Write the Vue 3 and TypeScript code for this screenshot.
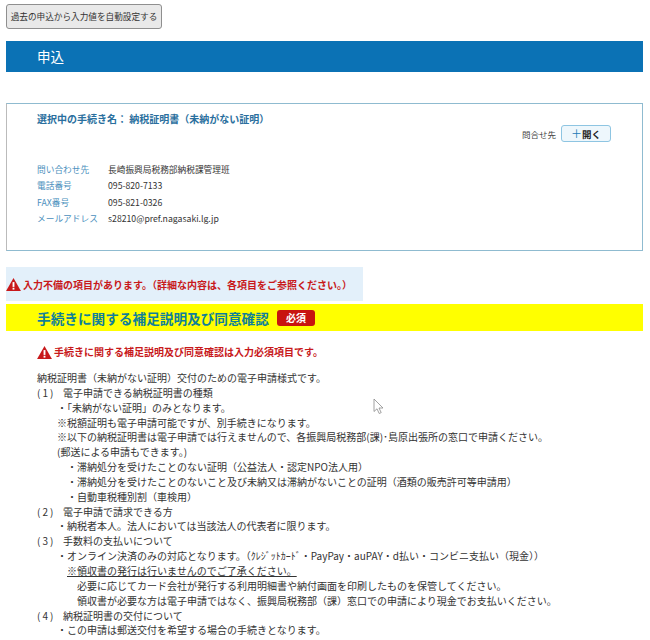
<script setup lang="ts">
interface Line { text: string; indent: string; num?: string; underline?: boolean }
const lines: Line[] = [
  { text: '納税証明書（未納がない証明）交付のための電子申請様式です。', indent: 'i0' },
  { num: '(1)', text: '電子申請できる納税証明書の種類', indent: 'i0' },
  { text: '・「未納がない証明」のみとなります。', indent: 'i1' },
  { text: '※税額証明も電子申請可能ですが、別手続きになります。', indent: 'i1' },
  { text: '※以下の納税証明書は電子申請では行えませんので、各振興局税務部(課)･島原出張所の窓口で申請ください。', indent: 'i1' },
  { text: '(郵送による申請もできます。)', indent: 'i1' },
  { text: '・滞納処分を受けたことのない証明（公益法人・認定NPO法人用）', indent: 'i2' },
  { text: '・滞納処分を受けたことのないこと及び未納又は滞納がないことの証明（酒類の販売許可等申請用）', indent: 'i2' },
  { text: '・自動車税種別割（車検用）', indent: 'i2' },
  { num: '(2)', text: '電子申請で請求できる方', indent: 'i0' },
  { text: '・納税者本人。法人においては当該法人の代表者に限ります。', indent: 'i1' },
  { num: '(3)', text: '手数料の支払いについて', indent: 'i0' },
  { text: '・オンライン決済のみの対応となります。（ｸﾚｼﾞｯﾄｶｰﾄﾞ・PayPay・auPAY・d払い・コンビニ支払い（現金））', indent: 'i1' },
  { text: '※領収書の発行は行いませんのでご了承ください。', indent: 'i2', underline: true },
  { text: '必要に応じてカード会社が発行する利用明細書や納付画面を印刷したものを保管してください。', indent: 'i3' },
  { text: '領収書が必要な方は電子申請ではなく、振興局税務部（課）窓口での申請により現金でお支払いください。', indent: 'i3' },
  { num: '(4)', text: '納税証明書の交付について', indent: 'i0' },
  { text: '・この申請は郵送交付を希望する場合の手続きとなります。', indent: 'i1' }
]
const contacts = [
  { label: '問い合わせ先', value: '長崎振興局税務部納税課管理班' },
  { label: '電話番号', value: '095-820-7133' },
  { label: 'FAX番号', value: '095-821-0326' },
  { label: 'メールアドレス', value: 's28210@pref.nagasaki.lg.jp' }
]
</script>

<template>
  <div class="page">
    <button class="history">過去の申込から入力値を自動設定する</button>
    <h1 class="title">申込</h1>

    <section class="box">
      <p class="proc">選択中の手続き名： 納税証明書（未納がない証明）</p>
      <div class="toggle-row">
        <span class="toggle-label">問合せ先</span>
        <button class="open"><span class="plus">＋</span>開く</button>
      </div>
      <dl class="contacts">
        <template v-for="c in contacts" :key="c.label">
          <dt>{{ c.label }}</dt>
          <dd>{{ c.value }}</dd>
        </template>
      </dl>
    </section>

    <div class="alert">
      <svg class="warn" viewBox="0 0 16 14" width="15" height="13"><path d="M8 0 L16 14 H0 Z" fill="#c8191b"/><rect x="7" y="4.4" width="2" height="5.2" fill="#fff"/><rect x="7" y="10.5" width="2" height="2" fill="#fff"/></svg>
      <span>入力不備の項目があります。（詳細な内容は、各項目をご参照ください。）</span>
    </div>

    <h2 class="section">
      <span>手続きに関する補足説明及び同意確認</span>
      <span class="required">必須</span>
    </h2>

    <div class="body">
      <p class="notice">
        <svg class="warn" viewBox="0 0 16 14" width="15" height="13"><path d="M8 0 L16 14 H0 Z" fill="#c8191b"/><rect x="7" y="4.4" width="2" height="5.2" fill="#fff"/><rect x="7" y="10.5" width="2" height="2" fill="#fff"/></svg>
        <span>手続きに関する補足説明及び同意確認は入力必須項目です。</span>
      </p>
      <p v-for="(l, i) in lines" :key="i" class="line" :class="l.indent"><span v-if="l.num" class="num">{{ l.num }}</span><span :class="{ under: l.underline }">{{ l.text }}</span></p>
    </div>

    <svg class="cursor" viewBox="0 0 12 17" width="12" height="17"><path d="M1 1 V13.5 L4 10.8 L6.2 15.5 L8.2 14.6 L6 10 H10 Z" fill="#fff" stroke="#8a8a8a" stroke-width="0.8"/></svg>
  </div>
</template>

<style scoped>
.page {
  position: relative;
  width: 650px;
  height: 640px;
  overflow: hidden;
  padding: 4px 7px 0 6px;
  box-sizing: border-box;
  background: #fff;
  color: #333;
  font-family: "Noto Sans CJK JP", "Noto Sans", sans-serif;
}
p, h1, h2, dl, dd { margin: 0; }
.history {
  display: block;
  width: 156px;
  height: 25px;
  padding: 0;
  border: 1px solid #8f8f8f;
  border-radius: 3px;
  background: #e9e9e9;
  color: #333;
  font: 400 8.65px/1 "Noto Sans CJK JP", sans-serif;
  white-space: nowrap;
}
.title {
  margin-top: 12px;
  height: 31px;
  padding-left: 31px;
  background: #0b72b5;
  color: #fff;
  font-size: 13.5px;
  font-weight: 400;
  line-height: 31px;
}
.box {
  margin-top: 31px;
  height: 148px;
  box-sizing: border-box;
  padding: 8px 31px 0 30px;
  border: 1px solid #8fbbd0;
  border-left-color: #bbb;
  background: #fff;
}
.proc {
  color: #2a6f9e;
  font-size: 10px;
  font-weight: 700;
  line-height: 14px;
}
.toggle-row {
  display: flex;
  justify-content: flex-end;
  align-items: center;
  gap: 5px;
  margin: -1px 0 0;
  height: 17px;
}
.toggle-label { font-size: 8.5px; color: #444; }
.open {
  width: 50px;
  height: 17px;
  padding: 0;
  border: 1px solid #8ec5e2;
  border-radius: 3px;
  background: #eef7fc;
  color: #222;
  font: 700 9.5px/15px "Noto Sans CJK JP", sans-serif;
}
.plus { color: #1b7ab8; font-weight: 400; font-size: 11px; }
.contacts {
  display: grid;
  grid-template-columns: 71px 1fr;
  grid-auto-rows: 16.3px;
  margin-top: 20px;
  font-size: 8.7px;
  line-height: 16.3px;
}
.contacts dt { color: #4a8fbd; }
.contacts dd { color: #333; }
.alert {
  display: flex;
  align-items: center;
  gap: 2px;
  margin-top: 16px;
  width: 357px;
  height: 34px;
  background: #e3f0fa;
  color: #c8191b;
  font-size: 10px;
  font-weight: 700;
}
.section {
  display: flex;
  align-items: center;
  gap: 8px;
  margin-top: 3px;
  height: 27px;
  padding-left: 31px;
  background: #ffff00;
  color: #0f7f9a;
  font-size: 13.65px;
  font-weight: 700;
}
.required {
  width: 38px;
  height: 16px;
  border-radius: 3px;
  background: #c8140f;
  color: #fff;
  font-size: 10px;
  line-height: 16px;
  text-align: center;
}
.body {
  padding: 13px 0 0 31px;
  font-size: 10px;
  line-height: 14.85px;
}
.notice {
  display: flex;
  align-items: center;
  gap: 2px;
  height: 16px;
  margin-bottom: 11px;
  color: #c8191b;
  font-weight: 700;
  font-size: 10px;
}
.line { white-space: nowrap; }
.num { display: inline-block; width: 26px; letter-spacing: 2px; }
.i0 { padding-left: 0; }
.i1 { padding-left: 20px; }
.i2 { padding-left: 30px; }
.i3 { padding-left: 40px; }
.under { text-decoration: underline; }
.cursor {
  position: absolute;
  left: 373px;
  top: 398px;
}
</style>
